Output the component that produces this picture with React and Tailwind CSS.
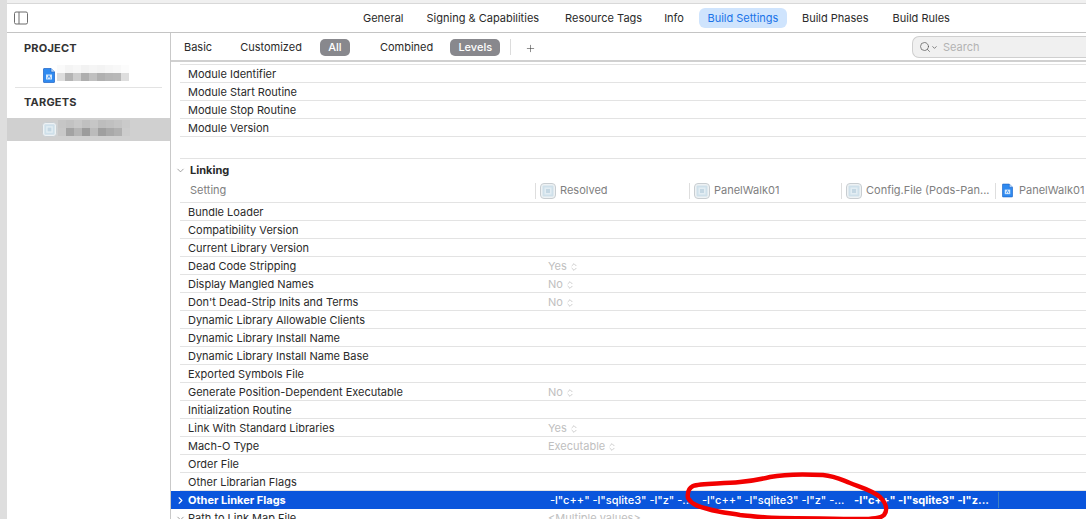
import React from 'react';
import { ChevronDown, ChevronRight, ChevronsUpDown, Plus, Search } from 'lucide-react';

const font = { fontFamily: 'Inter, sans-serif' };

const tabs = ['General', 'Signing & Capabilities', 'Resource Tags', 'Info', 'Build Settings', 'Build Phases', 'Build Rules'];

const moduleRows = ['Module Identifier', 'Module Start Routine', 'Module Stop Routine', 'Module Version'];

const linkingRows = [
    ['Bundle Loader'],
    ['Compatibility Version'],
    ['Current Library Version'],
    ['Dead Code Stripping', 'Yes'],
    ['Display Mangled Names', 'No'],
    ["Don't Dead-Strip Inits and Terms", 'No'],
    ['Dynamic Library Allowable Clients'],
    ['Dynamic Library Install Name'],
    ['Dynamic Library Install Name Base'],
    ['Exported Symbols File'],
    ['Generate Position-Dependent Executable', 'No'],
    ['Initialization Routine'],
    ['Link With Standard Libraries', 'Yes'],
    ['Mach-O Type', 'Executable'],
    ['Order File'],
    ['Other Librarian Flags'],
];

const mosaicA = [
    ['bg-[#fafafa]', 'bg-[#f4f4f4]', 'bg-[#f7f7f7]', 'bg-[#f2f2f2]', 'bg-[#f5f5f5]', 'bg-[#f3f3f3]', 'bg-[#f6f6f6]', 'bg-[#f8f8f8]', 'bg-[#fcfcfc]'],
    ['bg-[#dddddd]', 'bg-[#b4b4b4]', 'bg-[#cdcdcd]', 'bg-[#aeaeae]', 'bg-[#c0c0c0]', 'bg-[#b0b0b0]', 'bg-[#b6b6b6]', 'bg-[#b8b8b8]', 'bg-[#dedede]'],
];

const mosaicB = [
    ['bg-[#c6c6c6]', 'bg-[#c2c2c2]', 'bg-[#c8c8c8]', 'bg-[#c0c0c0]', 'bg-[#c6c6c6]', 'bg-[#bdbdbd]', 'bg-[#c0c0c0]', 'bg-[#c4c4c4]', 'bg-[#cacaca]'],
    ['bg-[#c8c8c8]', 'bg-[#a3a3a3]', 'bg-[#b5b5b5]', 'bg-[#9c9c9c]', 'bg-[#bbbbbb]', 'bg-[#9f9f9f]', 'bg-[#a9a9a9]', 'bg-[#b0b0b0]', 'bg-[#cccccc]'],
];

function FileIcon({ className }) {
    return (
        <svg viewBox="0 0 12 15" className={className}>
            <path d="M1 .5h7L11.500 4v10a.5.5 0 0 1-.5.5H1a.5.5 0 0 1-.5-.5V1A.5.5 0 0 1 1 .5z" fill="#2f8af0" stroke="#1c62c4" strokeWidth="0.7" />
            <path d="M8 .5V4h3.500" fill="#bfdcfb" stroke="#1c62c4" strokeWidth="0.6" />
            <path d="M3 6.500h6v5H3z" fill="#d5e8fc" />
            <path d="M4.500 10.500L6 7.500l1.500 3" fill="none" stroke="#2f8af0" strokeWidth="0.8" />
        </svg>
    );
}

function TargetIcon({ className }) {
    return (
        <svg viewBox="0 0 16 16" className={className}>
            <rect x="0.500" y="0.500" width="15" height="15" rx="3.500" fill="#eef2f4" stroke="#c8cdd1" />
            <rect x="2.500" y="2.500" width="11" height="11" rx="1" fill="#cfe0ea" />
            <rect x="4.500" y="4.500" width="7" height="7" fill="#e3edf3" />
            <rect x="6" y="6" width="4" height="4" fill="#c4d7e3" />
        </svg>
    );
}

function Mosaic({ rows, className }) {
    return (
        <div className={`flex flex-col ${className}`}>
            {rows.map((row, i) => (
                <div key={i} className="flex">
                    {row.map((cell, j) => (
                        <div key={j} className={`w-2 h-2 ${cell}`} />
                    ))}
                </div>
            ))}
        </div>
    );
}

function Row({ name, value }) {
    return (
        <div className="h-[18px] shrink-0 flex items-center border-b border-[#e3e3e3] ml-[9px] pt-[2px]">
            <span className="w-[368px] pl-[8px] shrink-0 text-[11px] leading-none text-[#2a2a2a]">{name}</span>
            {value && (
                <span className="flex items-center gap-[2px] text-[11px] leading-none text-[#c0c0c0]">
                    {value}
                    <ChevronsUpDown size={10} strokeWidth={1.5} className="text-[#b0b0b0]" />
                </span>
            )}
        </div>
    );
}

function ColumnHead({ width, icon, label }) {
    return (
        <div className={`${width} shrink-0 flex items-center pb-[2px]`}>
            <div className="w-px h-[16px] bg-[#dedede]" />
            <div className="w-[4px]" />
            {icon}
            <span className="ml-[4px] text-[11px] leading-none text-[#808080] whitespace-nowrap">{label}</span>
        </div>
    );
}

export default function App() {
    return (
        <div style={font} className="relative w-[1086px] h-[519px] overflow-hidden bg-white flex">
            <div className="w-[7px] shrink-0 bg-[#dedede]" />
            <div className="flex-1 flex flex-col min-w-0">
                <div className="h-[4px] shrink-0 bg-[#f0f0f0] border-b border-[#d8d8d8]" />

                <div className="h-[29px] shrink-0 flex items-center border-b border-[#c4c4c4] relative">
                    <svg viewBox="0 0 14 14" className="w-[14px] h-[14px] ml-[7px] shrink-0">
                        <rect x="0.500" y="1" width="13" height="12" rx="1.500" fill="none" stroke="#6d6d6d" />
                        <path d="M5 1v12" stroke="#6d6d6d" />
                    </svg>
                    <div className="ml-[335px] flex items-center text-[11px] leading-none text-[#2a2a2a]">
                        <span className="mr-[23px]">{tabs[0]}</span>
                        <span className="mr-[26px]">{tabs[1]}</span>
                        <span className="mr-[22px]">{tabs[2]}</span>
                        <span className="mr-[15px]">{tabs[3]}</span>
                        <span className="h-[20px] w-[88px] flex items-center justify-center rounded-[6px] bg-[#cfe4fd] text-[#1a73e8] mr-[15px]">{tabs[4]}</span>
                        <span className="mr-[24px]">{tabs[5]}</span>
                        <span>{tabs[6]}</span>
                    </div>
                </div>

                <div className="flex-1 flex min-h-0">
                    <aside className="w-[164px] shrink-0 border-r border-[#c9c9c9] flex flex-col">
                        <div className="h-[31px] shrink-0 pl-[17px] flex items-center text-[11px] font-bold tracking-[0.2px] leading-none text-[#333333]">PROJECT</div>
                        <div className="h-[24px] shrink-0 mx-[8px] flex items-center border-b border-[#e3e3e3]">
                            <FileIcon className="w-[12px] h-[15px] ml-[28px] mr-[2px]" />
                            <Mosaic rows={mosaicA} className="mb-[6px]" />
                        </div>
                        <div className="h-[30px] shrink-0 pl-[17px] pb-[2px] flex items-center text-[11px] font-bold tracking-[0.2px] leading-none text-[#333333]">TARGETS</div>
                        <div className="h-[23px] shrink-0 flex items-center bg-[#d0d0d0]">
                            <TargetIcon className="w-[15px] h-[15px] ml-[35px] mr-[1px]" />
                            <Mosaic rows={mosaicB} className="mb-[4px]" />
                        </div>
                    </aside>

                    <main className="flex-1 min-w-0 flex flex-col">
                        <div className="h-[29px] shrink-0 pt-[1px] flex items-center border-b-2 border-[#d0d0d0] text-[11px] leading-none text-[#2a2a2a]">
                            <span className="ml-[13px]">Basic</span>
                            <span className="ml-[28px]">Customized</span>
                            <span className="ml-[18px] h-[17px] w-[30px] rounded-[5px] bg-[#88888d] text-white font-medium flex items-center justify-center">All</span>
                            <span className="ml-[30px]">Combined</span>
                            <span className="ml-[17px] h-[17px] w-[50px] rounded-[5px] bg-[#88888d] text-white font-medium flex items-center justify-center">Levels</span>
                            <span className="ml-[10px] w-px h-[16px] bg-[#dcdcdc]" />
                            <Plus size={11} strokeWidth={1.3} className="ml-[14px] mt-[2px] text-[#444444]" />
                            <div className="ml-auto w-[174px] h-[22px] rounded-l-[7px] bg-[#f0f0f0] border border-r-0 border-[#cfcfcf] flex items-center pl-[6px]">
                                <Search size={12} strokeWidth={1.4} className="text-[#555555]" />
                                <ChevronDown size={7} strokeWidth={2.5} className="text-[#555555]" />
                                <span className="ml-[5px] text-[#b3b3b3]">Search</span>
                            </div>
                        </div>

                        <div className="h-[2px] shrink-0" />
                        <div className="ml-[9px] shrink-0 border-t border-[#e3e3e3]" />
                        {moduleRows.map(name => <Row key={name} name={name} />)}

                        <div className="h-[22px] shrink-0 border-b border-[#e3e3e3] ml-[9px]" />

                        <div className="h-[22px] shrink-0 flex items-center">
                            <ChevronDown size={11} strokeWidth={1.5} className="ml-[4px] text-[#777777]" />
                            <span className="ml-[4px] text-[11px] font-bold leading-none text-[#2a2a2a]">Linking</span>
                        </div>

                        <div className="h-[22px] shrink-0 flex items-center border-b border-[#e3e3e3] ml-[9px]">
                            <span className="w-[355px] pl-[10px] pb-[2px] shrink-0 text-[11px] leading-none text-[#808080]">Setting</span>
                            <ColumnHead width="w-[154px]" icon={<TargetIcon className="w-[16px] h-[16px]" />} label="Resolved" />
                            <ColumnHead width="w-[152px]" icon={<TargetIcon className="w-[16px] h-[16px]" />} label="PanelWalk01" />
                            <ColumnHead width="w-[154px]" icon={<TargetIcon className="w-[16px] h-[16px]" />} label="Config.File (Pods-Pan..." />
                            <ColumnHead width="w-[91px]" icon={<FileIcon className="w-[11px] h-[15px] mx-[2px]" />} label="PanelWalk01" />
                        </div>

                        {linkingRows.map(([name, value]) => <Row key={name} name={name} value={value} />)}

                        <div className="h-[18px] shrink-0 flex items-center bg-[#0a55dc] text-white text-[11px] leading-none">
                            <ChevronRight size={11} strokeWidth={2.5} className="ml-[4px]" />
                            <span className="ml-[2px] w-[362px] shrink-0 font-bold">Other Linker Flags</span>
                            <span className="w-[152px] shrink-0 font-medium whitespace-nowrap">-l"c++" -l"sqlite3" -l"z" -...</span>
                            <span className="w-[152px] shrink-0 font-medium whitespace-nowrap">-l"c++" -l"sqlite3" -l"z" -...</span>
                            <span className="w-[144px] shrink-0 font-bold whitespace-nowrap">-l"c++" -l"sqlite3" -l"z...</span>
                            <span className="w-px h-[16px] bg-[#3f7fc0]" />
                        </div>

                        <div className="h-[18px] shrink-0 flex items-center">
                            <ChevronDown size={11} strokeWidth={1.5} className="ml-[4px] text-[#777777]" />
                            <span className="ml-[2px] w-[360px] shrink-0 text-[11px] leading-none text-[#2a2a2a]">Path to Link Map File</span>
                            <span className="text-[11px] leading-none text-[#c0c0c0]">&lt;Multiple values&gt;</span>
                        </div>
                    </main>
                </div>
            </div>

            <svg viewBox="0 0 1086 519" className="absolute inset-0 w-[1086px] h-[519px] pointer-events-none">
                <path
                    d="M688 498 C687 491 689 488 693 486 C700 483 720 484 740 482 C752 481 762 479 770 477 C785 474 805 474 823 475 C835 476 842 480 850 483 C860 487 872 490 880 497 C886 503 888 510 884 515 C880 519 870 519 860 519 C835 519 805 518 780 518 C765 518 752 516 740 515 C728 513 718 512 708 509 C700 507 692 505 688 498 Z"
                    fill="none"
                    stroke="#f20000"
                    strokeWidth="4.500"
                    strokeLinejoin="round"
                />
            </svg>
        </div>
    );
}
